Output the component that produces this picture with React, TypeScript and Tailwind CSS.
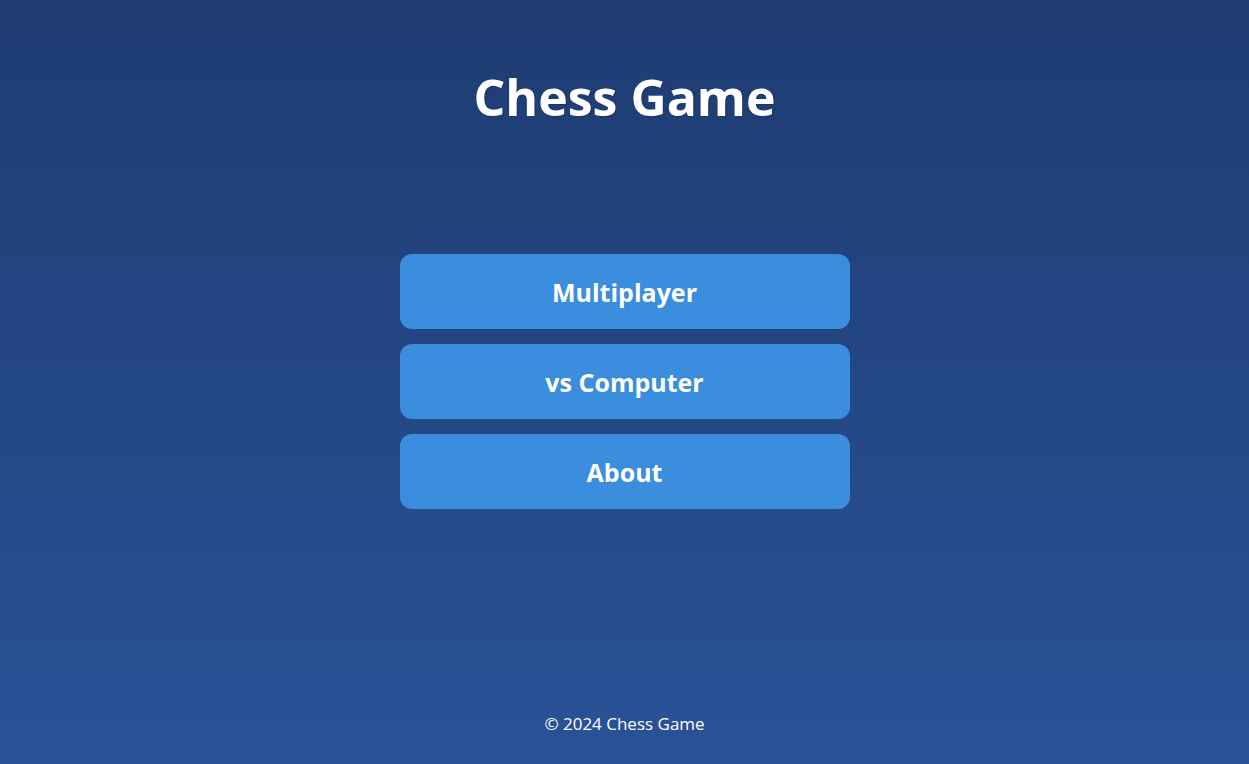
export default function App() {
  return (
    <div
      className="flex h-screen w-full flex-col items-center bg-gradient-to-b from-[#1e3c72] to-[#2a5298] text-white"
      style={{ fontFamily: '"Open Sans", "Noto Sans", sans-serif' }}
    >
      <h1 className="mt-[68px] h-[58px] text-[50px] font-bold leading-[58px] [text-shadow:1px_1px_2px_rgba(0,0,0,0.15)]">
        Chess Game
      </h1>
      <div className="mt-[128px] flex w-[450px] flex-col gap-[15px]">
        {["Multiplayer", "vs Computer", "About"].map((t) => (
          <button
            key={t}
            className="h-[75px] w-full rounded-[12px] bg-[#3b8ddd] pt-[2px] text-[25px] font-bold text-white"
          >
            {t}
          </button>
        ))}
      </div>
      <footer className="mt-auto mb-[28px] h-6 text-[17px] leading-6">© 2024 Chess Game</footer>
    </div>
  );
}
